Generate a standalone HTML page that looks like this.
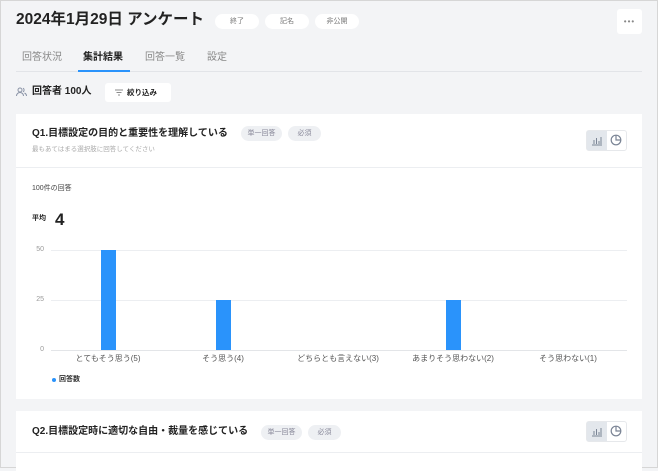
<!DOCTYPE html><html><head><meta charset="utf-8"><style>
*{box-sizing:border-box;margin:0;padding:0}
body{width:658px;height:468px;overflow:hidden;background:#f3f4f6;font-family:"Liberation Sans","Noto Sans CJK JP",sans-serif;color:#222;position:relative;border:1px solid #d6d6d6}
.a{position:absolute;white-space:nowrap;line-height:1.2}
.badge{position:absolute;height:15px;border-radius:8px;background:#fff;font-size:7px;color:#777;text-align:center;line-height:15px}
.tag{position:absolute;height:15px;border-radius:8px;background:#eef0f3;font-size:7px;color:#889;text-align:center;line-height:15px}
.card{position:absolute;left:15px;width:626px;background:#fff}
.ax{position:absolute;font-size:7px;color:#999;text-align:right;width:20px}
.grid{position:absolute;left:50px;width:576px;height:1px;background:#eceef1}
.bar{position:absolute;width:15px;background:#2a93fb}
.cat{position:absolute;font-size:8px;color:#555;width:120px;text-align:center;top:352px}
</style></head><body>
<div class="a" style="left:15px;top:10px;font-size:15.5px;font-weight:bold;color:#222">2024年1月29日 アンケート</div>
<div class="badge" style="left:214px;top:13px;width:44px">終了</div>
<div class="badge" style="left:264px;top:13px;width:44px">記名</div>
<div class="badge" style="left:314px;top:13px;width:44px">非公開</div>
<div class="a" style="left:616px;top:8px;width:25px;height:25px;background:#fff;border-radius:3px;text-align:center;font-size:8px;color:#888;line-height:25px;letter-spacing:1px">•••</div>
<div class="a" style="left:21px;top:51px;font-size:10px;color:#888">回答状況</div>
<div class="a" style="left:82px;top:51px;font-size:10px;color:#222;font-weight:bold">集計結果</div>
<div class="a" style="left:144px;top:51px;font-size:10px;color:#888">回答一覧</div>
<div class="a" style="left:206px;top:51px;font-size:10px;color:#888">設定</div>
<div class="a" style="left:15px;top:70px;width:626px;height:1px;background:#e2e4e8"></div>
<div class="a" style="left:77px;top:69px;width:52px;height:2px;background:#2a93fb"></div>
<svg class="a" style="left:15px;top:86px" width="11" height="10" viewBox="0 0 11 10" fill="none" stroke="#8a93a6" stroke-width="1"><circle cx="4" cy="3" r="2"/><path d="M0.5 9c0-2 1.5-3.5 3.5-3.5S7.5 7 7.5 9M7 1.2a2 2 0 010 3.6M8.5 6c1 .5 2 1.5 2 3"/></svg>
<div class="a" style="left:31px;top:85px;font-size:10px;font-weight:bold">回答者 100人</div>
<div class="a" style="left:104px;top:82px;width:66px;height:19px;background:#fff;border-radius:3px;font-size:7.5px;font-weight:bold;line-height:19px;padding-left:22px">絞り込み</div>
<svg class="a" style="left:114px;top:88px" width="8" height="7" viewBox="0 0 8 7" stroke="#666" stroke-width="0.8"><path d="M0 1h8M1.5 3.5h5M3 6h2"/></svg>

<div class="card" style="top:113px;height:285px"></div>
<div class="a" style="left:31px;top:127px;font-size:10px;font-weight:bold">Q1.目標設定の目的と重要性を理解している</div>
<div class="tag" style="left:240px;top:125px;width:41px">単一回答</div>
<div class="tag" style="left:287px;top:125px;width:33px">必須</div>
<div class="a" style="left:31px;top:145px;font-size:6.5px;color:#aaa">最もあてはまる選択肢に回答してください</div>
<div class="a" style="left:585px;top:129px;width:41px;height:21px;border:1px solid #e6e8eb;border-radius:3px;background:#fff"></div>
<div class="a" style="left:586px;top:130px;width:20px;height:19px;background:#e3e7ec"></div>
<svg class="a" style="left:590px;top:134px" width="12" height="11" viewBox="0 0 12 11" stroke="#7a8495" stroke-width="1"><path d="M1 10h10M3 9V5M5.5 9V3M8 9V6M10 9V2"/></svg>
<svg class="a" style="left:609px;top:133px" width="12" height="12" viewBox="0 0 12 12" fill="none" stroke="#7a8495" stroke-width="1.2"><circle cx="6" cy="6" r="4.8"/><path d="M6 1.2V6h4.8"/></svg>
<div class="a" style="left:15px;top:166px;width:626px;height:1px;background:#eceef1"></div>
<div class="a" style="left:31px;top:184px;font-size:7px;color:#444">100件の回答</div>
<div class="a" style="left:31px;top:214px;font-size:7px;font-weight:bold">平均</div>
<div class="a" style="left:54px;top:209px;font-size:17px;font-weight:bold">4</div>
<div class="grid" style="top:249px"></div><div class="grid" style="top:299px"></div><div class="grid" style="top:349px;background:#e3e5e8"></div>
<div class="ax" style="left:23px;top:245px">50</div><div class="ax" style="left:23px;top:295px">25</div><div class="ax" style="left:23px;top:345px">0</div>
<div class="bar" style="left:100px;top:249px;height:100px"></div>
<div class="bar" style="left:215px;top:299px;height:50px"></div>
<div class="bar" style="left:445px;top:299px;height:50px"></div>
<div class="cat" style="left:47px">とてもそう思う(5)</div>
<div class="cat" style="left:162px">そう思う(4)</div>
<div class="cat" style="left:277px">どちらとも言えない(3)</div>
<div class="cat" style="left:392px">あまりそう思わない(2)</div>
<div class="cat" style="left:507px">そう思わない(1)</div>
<div class="a" style="left:51px;top:377px;width:4px;height:4px;border-radius:50%;background:#2a93fb"></div>
<div class="a" style="left:58px;top:375px;font-size:7px;font-weight:bold;color:#333">回答数</div>

<div class="card" style="top:410px;height:60px"></div>
<div class="a" style="left:31px;top:425px;font-size:10px;font-weight:bold">Q2.目標設定時に適切な自由・裁量を感じている</div>
<div class="tag" style="left:260px;top:424px;width:41px">単一回答</div>
<div class="tag" style="left:307px;top:424px;width:33px">必須</div>
<div class="a" style="left:585px;top:420px;width:41px;height:21px;border:1px solid #e6e8eb;border-radius:3px;background:#fff"></div>
<div class="a" style="left:586px;top:421px;width:20px;height:19px;background:#e3e7ec"></div>
<svg class="a" style="left:590px;top:425px" width="12" height="11" viewBox="0 0 12 11" stroke="#7a8495" stroke-width="1"><path d="M1 10h10M3 9V5M5.5 9V3M8 9V6M10 9V2"/></svg>
<svg class="a" style="left:609px;top:424px" width="12" height="12" viewBox="0 0 12 12" fill="none" stroke="#7a8495" stroke-width="1.2"><circle cx="6" cy="6" r="4.8"/><path d="M6 1.2V6h4.8"/></svg>
<div class="a" style="left:15px;top:451px;width:626px;height:1px;background:#eceef1"></div>
</body></html>
